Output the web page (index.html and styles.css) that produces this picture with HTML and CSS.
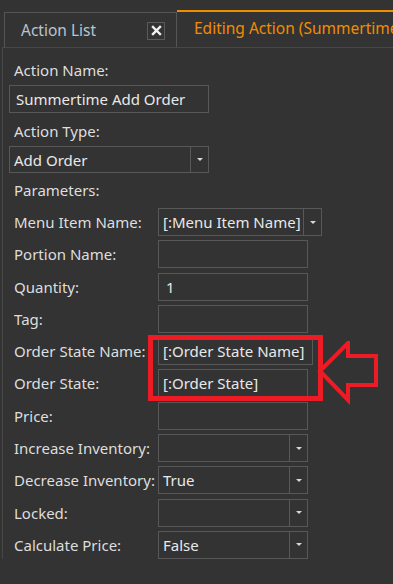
FILE: index.html
```html
<!DOCTYPE html>
<html>
<head>
<meta charset="utf-8">
<link rel="stylesheet" href="styles.css">
</head>
<body>
<div class="tabstrip">
  <div class="tab tab-inactive">
    <span class="tab-title">Action List</span>
    <span class="tab-close"><svg width="11" height="11" viewBox="0 0 11 11"><path d="M2 2 L9 9 M9 2 L2 9" stroke="#f2f2f2" stroke-width="2.4" stroke-linecap="square"/></svg></span>
  </div>
  <div class="tab tab-active"><span class="tab-text">Editing Action (Summertime Add Order)</span></div>
</div>
<div class="panel">
  <div class="label top-label">Action Name:</div>
  <div class="field wide">Summertime Add Order</div>
  <div class="label top-label">Action Type:</div>
  <div class="field wide combo"><span class="val">Add Order</span><span class="drop"><i class="tri"></i></span></div>
  <div class="label top-label params">Parameters:</div>
  <div class="grid">
    <div class="label">Menu Item Name:</div>
    <div class="field combo menu"><span class="val">[:Menu Item Name]</span><span class="drop"><i class="tri"></i></span></div>
    <div class="label">Portion Name:</div>
    <div class="field std"></div>
    <div class="label">Quantity:</div>
    <div class="field std"><span class="val num">1</span></div>
    <div class="label">Tag:</div>
    <div class="field std"></div>
    <div class="label">Order State Name:</div>
    <div class="field osn"><span class="val">[:Order State Name]</span></div>
    <div class="label">Order State:</div>
    <div class="field std"><span class="val">[:Order State]</span></div>
    <div class="label">Price:</div>
    <div class="field std"></div>
    <div class="label">Increase Inventory:</div>
    <div class="field std combo"><span class="val"></span><span class="drop"><i class="tri"></i></span></div>
    <div class="label">Decrease Inventory:</div>
    <div class="field std combo"><span class="val">True</span><span class="drop"><i class="tri"></i></span></div>
    <div class="label">Locked:</div>
    <div class="field std combo"><span class="val"></span><span class="drop"><i class="tri"></i></span></div>
    <div class="label">Calculate Price:</div>
    <div class="field std combo"><span class="val">False</span><span class="drop"><i class="tri"></i></span></div>
  </div>
</div>
<div class="highlight-box"></div>
<svg class="highlight-arrow" width="70" height="70" viewBox="0 0 70 70">
  <polygon points="4,30 32,2 32,15 60,15 60,44 32,44 32,59" fill="none" stroke="#ed1c24" stroke-width="4" stroke-linejoin="miter"/>
</svg>
</body>
</html>
```
FILE: styles.css
```css
html, body {
  margin: 0;
  padding: 0;
  background: #333333;
  height: 100%;
  overflow: hidden;
}
body {
  font-family: "Noto Sans", "Open Sans", sans-serif;
  font-size: 15px;
  color: #dcdcdc;
  position: relative;
}
.tabstrip {
  display: flex;
  align-items: flex-end;
  height: 47px;
  padding-left: 4px;
  white-space: nowrap;
}
.tab {
  box-sizing: border-box;
  display: flex;
  align-items: center;
}
.tab-inactive {
  width: 173px;
  height: 35px;
  border: 1px solid #555555;
  border-bottom: none;
  padding-left: 16px;
  padding-right: 11px;
  justify-content: space-between;
  color: #b8c4d0;
  font-size: 15.5px;
}
.tab-close {
  box-sizing: border-box;
  width: 18px;
  height: 18px;
  border: 1px solid #5a5a5a;
  display: flex;
  align-items: center;
  justify-content: center;
  margin-top: 1px;
}
.tab-active {
  flex: 1;
  min-width: 0;
  height: 37px;
  border-top: 2px solid #f28c00;
  padding-left: 17px;
  color: #f28c00;
  font-size: 15.5px;
  overflow: hidden;
  padding-bottom: 4px;
}
.tab-text {
  display: block;
  overflow: hidden;
  white-space: nowrap;
}
.panel {
  margin-left: 2px;
  border-left: 1px solid #474747;
  border-top: 1px solid #474747;
  padding: 12px 0 0 6px;
  display: flex;
  flex-direction: column;
  align-items: flex-start;
}
.label {
  line-height: 20px;
  color: #dedede;
  white-space: nowrap;
}
.top-label {
  margin-left: 5px;
  margin-bottom: 5px;
}
.field {
  box-sizing: border-box;
  border: 1px solid #585858;
  height: 28px;
  display: flex;
  align-items: center;
  color: #e8e8e8;
  white-space: nowrap;
}
.wide {
  width: 200px;
  padding-left: 6px;
  margin-bottom: 8px;
}
.wide.combo {
  padding-left: 4px;
  height: 27px;
  margin-bottom: 7px;
}
.combo .val {
  flex: 1;
}
.drop {
  align-self: stretch;
  width: 17px;
  border-left: 1px solid #585858;
  display: flex;
  align-items: center;
  justify-content: center;
}
.tri {
  width: 0;
  height: 0;
  border-left: 3px solid transparent;
  border-right: 3px solid transparent;
  border-top: 3px solid #d8d8d8;
}
.params {
  margin-bottom: 8px;
}
.grid {
  display: grid;
  grid-template-columns: 144px auto;
  row-gap: 4.3px;
  margin-left: 5px;
  align-items: center;
  justify-items: start;
}
.grid .field {
  padding-left: 4px;
}
.std {
  width: 150px;
}
.menu {
  width: 164px;
}
.osn {
  width: 155px;
}
.num {
  padding-left: 3px;
}
.highlight-box {
  position: absolute;
  left: 148px;
  top: 335px;
  width: 175px;
  height: 66px;
  box-sizing: border-box;
  border: 5px solid #ed1c24;
}
.highlight-arrow {
  position: absolute;
  left: 316px;
  top: 341px;
}
```
